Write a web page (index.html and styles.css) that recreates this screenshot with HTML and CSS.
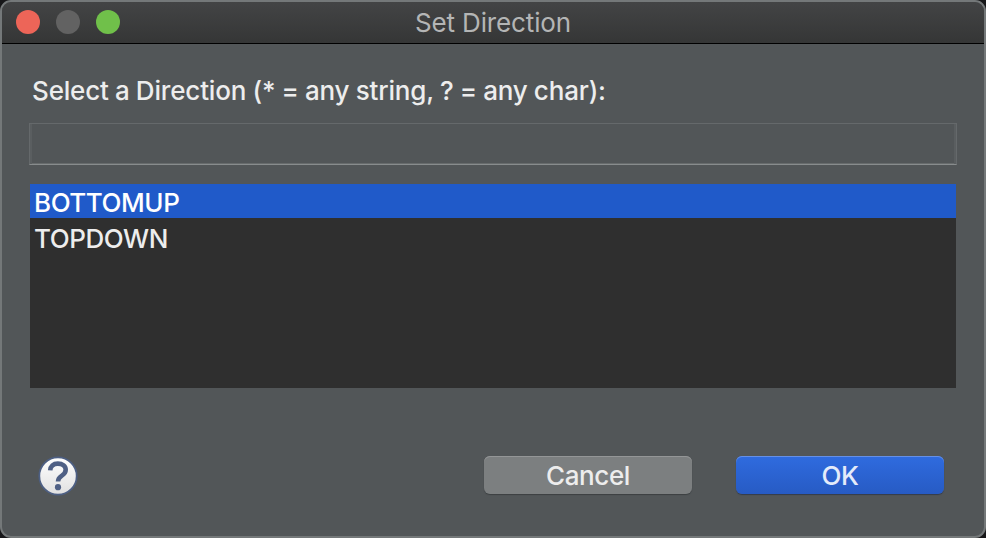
FILE: index.html
```html
<!DOCTYPE html>
<html lang="en">
<head>
<meta charset="utf-8">
<title>Set Direction</title>
<link rel="stylesheet" href="styles.css">
</head>
<body>
<main class="window">
  <header class="titlebar">
    <div class="lights"><span class="light close"></span><span class="light minimize"></span><span class="light expand"></span></div>
    <h1 class="title">Set Direction</h1>
  </header>
  <section class="content">
    <label class="prompt" for="filter">Select a Direction (* = any string, ? = any char):</label>
    <input class="filter" id="filter" type="text">
    <ul class="list">
      <li class="item selected">BOTTOMUP</li>
      <li class="item">TOPDOWN</li>
    </ul>
    <footer class="footer">
      <svg class="help" viewBox="0 0 40 40" role="img" aria-label="Help">
        <defs><linearGradient id="face" x1="0" y1="0" x2="0" y2="1"><stop offset="0" stop-color="#fff"/><stop offset="1" stop-color="#e0e0e0"/></linearGradient></defs>
        <circle cx="20" cy="20" r="18.7" fill="url(#face)" stroke="#4d5f83" stroke-width="1.8"/>
        <path d="M12.2 14.4C12.4 10.2 15.3 7.6 19.8 7.6c4.8 0 7.9 2.4 7.9 6.2 0 2.8-1.4 4.3-3.8 5.8-2.6 1.6-3.9 2.6-3.9 6" fill="none" stroke="#4f6085" stroke-width="4.6"/>
        <circle cx="20" cy="31.2" r="3.1" fill="#4f6085"/>
      </svg>
      <div class="buttons">
        <button class="button cancel" type="button">Cancel</button>
        <button class="button ok" type="button">OK</button>
      </div>
    </footer>
  </section>
</main>
</body>
</html>
```

FILE: styles.css
```css
* { box-sizing: border-box; }
body {
  margin: 0;
  background: #171719;
  font-family: Inter, "Liberation Sans", sans-serif;
  font-size: 26px;
  font-weight: 450;
  color: #ededed;
}
.window {
  width: 986px;
  height: 538px;
  border: 2px solid #747879;
  border-radius: 11px;
  background: #525658;
  overflow: hidden;
}
.titlebar {
  display: grid;
  grid-template-columns: 120px 1fr 120px;
  align-items: center;
  height: 42px;
  padding-bottom: 2px;
  border-bottom: 1px solid #000;
  background: linear-gradient(#434445, #353636);
}
.lights { display: flex; gap: 16px; padding-left: 14px; }
.light { width: 24px; height: 24px; border-radius: 50%; }
.close { background: #ed6558; }
.minimize { background: #626262; }
.expand { background: #70c04a; }
.title {
  margin: 0;
  padding-top: 2px;
  font-size: 26px;
  font-weight: 430;
  letter-spacing: -0.15px;
  line-height: 38px;
  color: #b4b5b5;
  text-align: center;
  white-space: nowrap;
}
.content { display: flex; flex-direction: column; padding: 31px 28px 0 27px; }
.prompt {
  height: 32px;
  padding-left: 3px;
  line-height: 32px;
  letter-spacing: -0.17px;
  word-spacing: -0.5px;
  white-space: nowrap;
}
.filter {
  width: 928px;
  height: 42px;
  margin: 16px 0 0;
  padding: 4px 8px;
  border: 1px solid #65696b;
  border-bottom: 1px solid #888c8d;
  box-shadow: inset 2px 0 #5a5e60, inset -2px 0 #5a5e60, inset 0 -1px #676b6c;
  background: #525658;
  color: inherit;
  font: inherit;
  outline: none;
}
.list {
  width: 926px;
  height: 204px;
  margin: 19px 0 0 1px;
  padding: 0;
  list-style: none;
  background: #2f2f2f;
}
.item { height: 36px; padding-left: 4px; line-height: 41px; letter-spacing: -0.45px; }
.item.selected { height: 34px; line-height: 38px; background: #205ac9; color: #fff; }
.footer { display: flex; justify-content: space-between; padding: 68px 12px 0 9px; }
.help { width: 40px; height: 40px; }
.buttons { display: flex; gap: 44px; }
.button {
  width: 208px;
  height: 38px;
  padding: 2px 0 0;
  border: 0;
  border-radius: 6px;
  font: inherit;
  line-height: 36px;
  letter-spacing: -0.4px;
  color: #ededed;
}
.cancel { background: #7c7f80; box-shadow: inset 0 1px #949697, 0 1px 1px #3c4042; }
.ok { color: #e4ebfa; background: linear-gradient(#2f6bdf, #275bc4); box-shadow: inset 0 1px #6590e6, 0 1px 1px #343c4c; }
```
